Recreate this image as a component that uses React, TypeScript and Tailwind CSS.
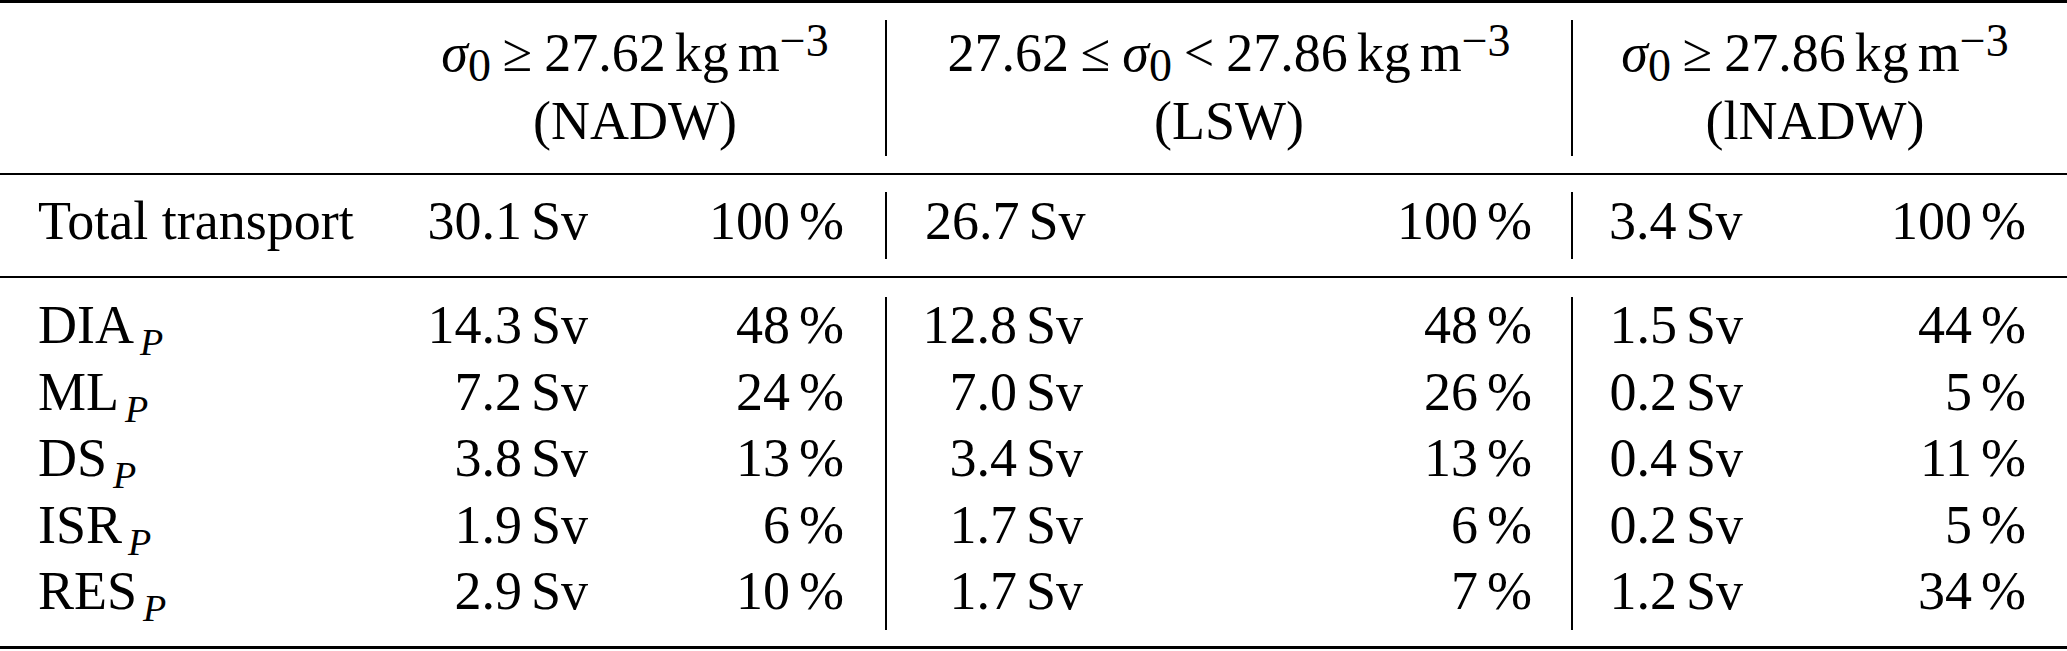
import React from "react";

const COLS = "grid grid-cols-[393px_235px_257px_2px_236px_448px_2px_210px_284px]";

const rows = [
	{label: "DIA", a: "14.3", ap: "48", b: "12.8", bp: "48", c: "1.5", cp: "44"},
	{label: "ML", a: "7.2", ap: "24", b: "7.0", bp: "26", c: "0.2", cp: "5"},
	{label: "DS", a: "3.8", ap: "13", b: "3.4", bp: "13", c: "0.4", cp: "11"},
	{label: "ISR", a: "1.9", ap: "6", b: "1.7", bp: "6", c: "0.2", cp: "5"},
	{label: "RES", a: "2.9", ap: "10", b: "1.7", bp: "7", c: "1.2", cp: "34"},
];

// LaTeX \, thin space
const Thin = () => <span className="inline-block w-[0.1667em]" />;
const Rel = () => <span className="inline-block w-[0.22em]" />;

const Sigma = () => (
	<>
		<span className="italic">σ</span>
		<span className="relative top-[10px] text-[46px] leading-none">0</span>
	</>
);

const Unit = () => (
	<>
		<Thin />kg<Thin />m
		<span className="relative -top-[15px] text-[46px] leading-none">−3</span>
	</>
);

const Sv = ({v}: {v: string}) => (
	<>
		{v}
		<Thin />Sv
	</>
);

const Pct = ({v}: {v: string}) => (
	<>
		{v}
		<Thin />%
	</>
);

const Bar = () => <div className="bg-black" />;

const HeadCell = ({top, bottom, className}: {top: React.ReactNode; bottom: string; className: string}) => (
	<div className={`col-span-2 text-center leading-[67px] ${className}`}>
		<div className="h-[68px] whitespace-nowrap">{top}</div>
		<div className="h-[68px]">{bottom}</div>
	</div>
);

export default function App() {
	return (
		<div className="w-[2067px] h-[651px] bg-white text-black font-[family-name:Liberation_Serif] text-[54px]">
			<div className="h-[3px] bg-black" />

			{/* header */}
			<div className={`${COLS} pt-[17px] pb-[17px]`}>
				<div />
				<HeadCell
					className="pr-[8px]"
					top={
						<>
							<Sigma />
							<Rel />≥<Rel />27.62
							<Unit />
						</>
					}
					bottom="(NADW)"
				/>
				<Bar />
				<HeadCell
					className=""
					top={
						<>
							27.62<Rel />≤<Rel />
							<Sigma />
							<Rel />&lt;<Rel />27.86
							<Unit />
						</>
					}
					bottom="(LSW)"
				/>
				<Bar />
				<HeadCell
					className="pr-[10px]"
					top={
						<>
							<Sigma />
							<Rel />≥<Rel />27.86
							<Unit />
						</>
					}
					bottom="(lNADW)"
				/>
			</div>

			<div className="h-[2px] bg-black" />

			{/* total */}
			<div className={`${COLS} auto-rows-[67px] pt-[17px] pb-[17px] leading-[59px] whitespace-nowrap`}>
				<div className="pl-[38px]">Total transport</div>
				<div className="text-right pr-[40px]"><Sv v="30.1" /></div>
				<div className="text-right pr-[41px]"><Pct v="100" /></div>
				<Bar />
				<div className="pl-[38px]"><Sv v="26.7" /></div>
				<div className="text-right pr-[39px]"><Pct v="100" /></div>
				<Bar />
				<div className="pl-[36px]"><Sv v="3.4" /></div>
				<div className="text-right pr-[41px]"><Pct v="100" /></div>
			</div>

			<div className="h-[2px] bg-black" />

			{/* contributions */}
			<div className={`${COLS} auto-rows-[66.6px] pt-[19px] pb-[16px] leading-[56px] whitespace-nowrap`}>
				{rows.map((r) => (
					<React.Fragment key={r.label}>
						<div className="pl-[38px]">
							{r.label}
							<span className="relative top-[12px] ml-[6px] italic text-[38px] leading-none">P</span>
						</div>
						<div className="text-right pr-[40px]"><Sv v={r.a} /></div>
						<div className="text-right pr-[41px]"><Pct v={r.ap} /></div>
						<Bar />
						<div className="text-right pr-[40px]"><Sv v={r.b} /></div>
						<div className="text-right pr-[39px]"><Pct v={r.bp} /></div>
						<Bar />
						<div className="text-right pr-[40px]"><Sv v={r.c} /></div>
						<div className="text-right pr-[41px]"><Pct v={r.cp} /></div>
					</React.Fragment>
				))}
			</div>

			<div className="h-[3px] bg-black" />
		</div>
	);
}
